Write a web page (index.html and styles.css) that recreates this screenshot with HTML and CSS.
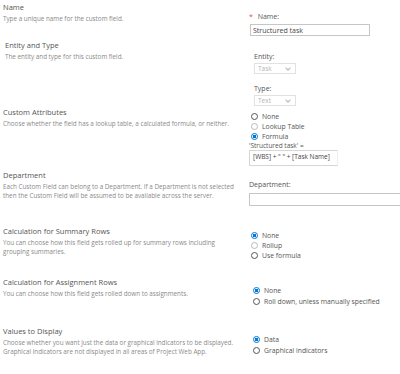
FILE: index.html
```html
<!DOCTYPE html>
<html lang="en">

<head>
    <meta charset="UTF-8">
    <meta name="viewport" content="width=device-width, initial-scale=1.0">
    <title>New Custom Field</title>
    <link rel="stylesheet" href="styles.css">
</head>

<body>
    <div class="form">
        <div class="section sec-name">
            <div class="info">
                <h3>Name</h3>
                <p>Type a unique name for the custom field.</p>
            </div>
            <div class="field">
                <label class="label"><span class="req">*</span> Name:</label>
                <input class="text name-input" type="text" value="Structured task">
            </div>
        </div>

        <div class="section sec-entity">
            <div class="info indent">
                <h3>Entity and Type</h3>
                <p>The entity and type for this custom field.</p>
            </div>
            <div class="field field-entity">
                <label class="label">Entity:</label>
                <div class="select">Task <span class="caret"></span></div>
                <label class="label label-type">Type:</label>
                <div class="select">Text <span class="caret"></span></div>
            </div>
        </div>

        <div class="section sec-custom">
            <div class="info">
                <h3>Custom Attributes</h3>
                <p>Choose whether the field has a lookup table, a calculated formula, or neither.</p>
            </div>
            <div class="field field-radios">
                <div class="radio"><span class="dot"></span>None</div>
                <div class="radio"><span class="dot faint"></span>Lookup Table</div>
                <div class="radio"><span class="dot on"></span>Formula</div>
                <div class="formula-label">'Structured task' =</div>
                <div class="formula">[WBS] + " " + [Task Name]</div>
            </div>
        </div>

        <div class="section sec-dept">
            <div class="info">
                <h3>Department</h3>
                <p>Each Custom Field can belong to a Department. If a Department is not selected
                    then the Custom Field will be assumed to be available across the server.</p>
            </div>
            <div class="field field-dept">
                <label class="label">Department:</label>
                <div class="text dept-input"></div>
            </div>
        </div>

        <div class="section sec-summary">
            <div class="info">
                <h3>Calculation for Summary Rows</h3>
                <p>You can choose how this field gets rolled up for summary rows including<br>
                    grouping summaries.</p>
            </div>
            <div class="field field-radios">
                <div class="radio"><span class="dot on"></span>None</div>
                <div class="radio"><span class="dot faint"></span>Rollup</div>
                <div class="radio"><span class="dot"></span>Use formula</div>
            </div>
        </div>

        <div class="section sec-assign">
            <div class="info">
                <h3>Calculation for Assignment Rows</h3>
                <p>You can choose how this field gets rolled down to assignments.</p>
            </div>
            <div class="field field-radios shift">
                <div class="radio tall"><span class="dot on"></span>None</div>
                <div class="radio tall"><span class="dot"></span>Roll down, unless manually specified</div>
            </div>
        </div>

        <div class="section sec-values">
            <div class="info">
                <h3>Values to Display</h3>
                <p>Choose whether you want just the data or graphical indicators to be displayed.
                    Graphical indicators are not displayed in all areas of Project Web App.</p>
            </div>
            <div class="field field-radios shift">
                <div class="radio tall"><span class="dot on"></span>Data</div>
                <div class="radio tall"><span class="dot"></span>Graphical indicators</div>
            </div>
        </div>
    </div>
</body>

</html>
```

FILE: styles.css
```css
body {
    margin: 0;
    background: #ffffff;
    font-family: "Open Sans", "Noto Sans", sans-serif;
    color: #555555;
    overflow: hidden;
}

.form {
    padding-top: 2px;
}

.section {
    display: flex;
}

.sec-name { height: 38px; }
.sec-entity { height: 67px; }
.sec-custom { height: 63px; }
.sec-dept { height: 56px; }
.sec-summary { height: 51px; }
.sec-assign { height: 49px; }

.info {
    width: 246px;
    padding-left: 3px;
    flex-shrink: 0;
}

.info.indent {
    padding-left: 5px;
}

.info h3 {
    margin: 0;
    font-size: 7.5px;
    line-height: 10px;
    font-weight: normal;
    color: #555555;
}

.info p {
    margin: 2px 0 0;
    font-size: 6.3px;
    line-height: 9px;
    color: #8a8a8a;
}

.field {
    padding-top: 10px;
    flex: 1;
    min-width: 0;
}

.label {
    display: block;
    font-size: 7px;
    line-height: 10px;
    color: #555555;
}

.req {
    color: #d9534f;
    margin-right: 3px;
}

.text {
    display: block;
    box-sizing: border-box;
    border: 1px solid #c6c6c6;
    background: #ffffff;
    font-family: inherit;
    font-size: 7px;
    color: #444444;
    margin: 0;
}

.name-input {
    width: 120px;
    height: 12px;
    padding: 0 2px;
    margin-left: 1px;
    margin-top: 2px;
}

.field-entity {
    padding-top: 12px;
    padding-left: 3px;
}

.select {
    box-sizing: border-box;
    width: 42px;
    height: 11px;
    margin-top: 1px;
    border: 1px solid #e1e1e1;
    font-size: 6.5px;
    line-height: 9px;
    padding-left: 3px;
    color: #b5b5b5;
    position: relative;
}

.caret {
    position: absolute;
    right: 5px;
    top: 2px;
    width: 3px;
    height: 3px;
    border-right: 1px solid #b5b5b5;
    border-bottom: 1px solid #b5b5b5;
    transform: rotate(45deg);
}

.label-type {
    margin-top: 10px;
}

.field-radios {
    padding-top: 4px;
    padding-left: 2px;
}

.field-radios.shift {
    padding-top: 8px;
    padding-left: 4px;
}

.radio {
    display: flex;
    align-items: center;
    height: 10px;
    font-size: 6.8px;
    color: #555555;
}

.radio.tall {
    height: 11px;
}

.dot {
    box-sizing: border-box;
    width: 7px;
    height: 7px;
    border: 1px solid #555555;
    border-radius: 50%;
    margin-right: 4px;
    flex-shrink: 0;
}

.dot.faint {
    border-color: #b9b9b9;
}

.dot.on {
    border-color: #0078d4;
    background: radial-gradient(circle, #0078d4 0 1.6px, #ffffff 2px);
}

.formula-label {
    margin-left: -2px;
    font-size: 6.5px;
    line-height: 9px;
    color: #555555;
}

.formula {
    box-sizing: border-box;
    width: 89px;
    height: 16px;
    margin-left: -2px;
    border: 1px solid #d6d6d6;
    border-right-color: #eeeeee;
    padding: 1px 3px;
    font-size: 6.5px;
    line-height: 9px;
    color: #444444;
}

.field-dept {
    padding-top: 10px;
}

.dept-input {
    width: 160px;
    height: 13px;
    margin-top: 3px;
}
```
